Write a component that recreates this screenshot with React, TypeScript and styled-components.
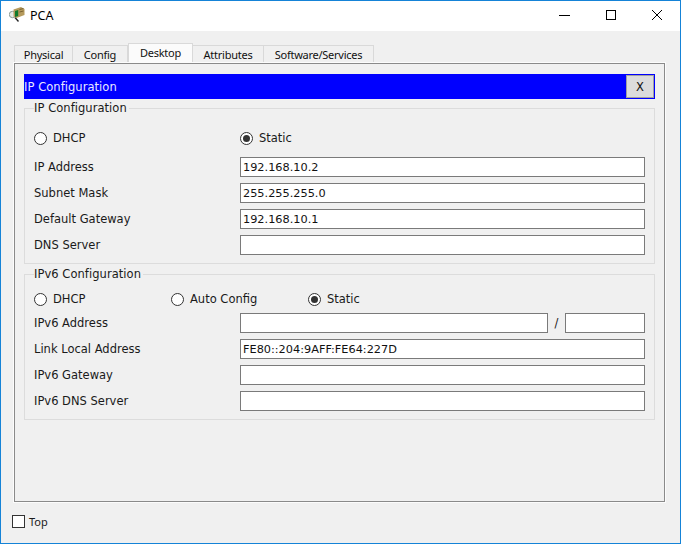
import styled, { createGlobalStyle } from 'styled-components';

const GlobalStyle = createGlobalStyle`
  html, body {
    margin: 0;
    padding: 0;
    background: #f0f0f0;
  }
  * {
    box-sizing: border-box;
  }
`;

const tabs = [
  { label: 'Physical', width: 59 },
  { label: 'Config', width: 55 },
  { label: 'Desktop', width: 65, active: true },
  { label: 'Attributes', width: 71 },
  { label: 'Software/Services', width: 110 },
];

const ipv4Rows = [
  { label: 'IP Address', value: '192.168.10.2' },
  { label: 'Subnet Mask', value: '255.255.255.0' },
  { label: 'Default Gateway', value: '192.168.10.1' },
  { label: 'DNS Server', value: '' },
];

const AppIcon = () => (
  <svg width="16" height="16" viewBox="0 0 16 16">
    <circle cx="3.5" cy="7.5" r="3.2" fill="#e8ecea" stroke="#8a9a94" strokeWidth="1" />
    <path d="M6 10.5l3.5 4" stroke="#222" strokeWidth="1.4" />
    <path d="M4.5 2.5l7.5-2.5 3.5 2v6l-8 3-3-1.5z" fill="#b59a5c" />
    <path d="M6 4l3.2-1v6l-3.2 1z" fill="#0f7a2c" />
    <path d="M10.5 2.5l4-1M10.5 5l4-1" stroke="#6a5326" strokeWidth="0.8" />
  </svg>
);

const MinimizeIcon = () => (
  <svg width="12" height="12" viewBox="0 0 12 12">
    <path d="M0 6.5h11" stroke="#000" strokeWidth="1" />
  </svg>
);

const MaximizeIcon = () => (
  <svg width="12" height="12" viewBox="0 0 12 12">
    <rect x="1.5" y="1.5" width="9" height="9" fill="none" stroke="#000" strokeWidth="1" />
  </svg>
);

const CloseIcon = () => (
  <svg width="12" height="12" viewBox="0 0 12 12">
    <path d="M1 1l10 10M11 1L1 11" stroke="#000" strokeWidth="1" />
  </svg>
);

const Radio = ({ checked }: { checked?: boolean }) => (
  <RadioCircle>{checked && <RadioDot />}</RadioCircle>
);

export default function App() {
  return (
    <>
      <GlobalStyle />
      <Frame>
        <TitleBar>
          <AppIcon />
          <TitleText>PCA</TitleText>
          <WindowControls>
            <MinimizeIcon />
            <MaximizeIcon />
            <CloseIcon />
          </WindowControls>
        </TitleBar>
        <Body>
          <TabStrip>
            {tabs.map((tab) => (
              <Tab key={tab.label} $active={tab.active} $width={tab.width}>
                {tab.label}
              </Tab>
            ))}
          </TabStrip>
          <Panel>
            <Header>
              <HeaderTitle>IP Configuration</HeaderTitle>
              <CloseButton>X</CloseButton>
            </Header>

            <Group $height={163}>
              <Legend>IP Configuration</Legend>
              <RadioRow $height={30}>
                <RadioOption $width={206}>
                  <Radio />
                  DHCP
                </RadioOption>
                <RadioOption>
                  <Radio checked />
                  Static
                </RadioOption>
              </RadioRow>
              <Rows>
                {ipv4Rows.map((row) => (
                  <FieldRow key={row.label}>
                    <FieldLabel>{row.label}</FieldLabel>
                    <Field>{row.value}</Field>
                  </FieldRow>
                ))}
              </Rows>
            </Group>

            <Group $height={153}>
              <Legend>IPv6 Configuration</Legend>
              <RadioRow $height={20}>
                <RadioOption $width={137}>
                  <Radio />
                  DHCP
                </RadioOption>
                <RadioOption $width={137}>
                  <Radio />
                  Auto Config
                </RadioOption>
                <RadioOption>
                  <Radio checked />
                  Static
                </RadioOption>
              </RadioRow>
              <Rows>
                <FieldRow>
                  <FieldLabel>IPv6 Address</FieldLabel>
                  <Field $width={308} />
                  <Slash>/</Slash>
                  <Field $width={80} />
                </FieldRow>
                <FieldRow>
                  <FieldLabel>Link Local Address</FieldLabel>
                  <Field>FE80::204:9AFF:FE64:227D</Field>
                </FieldRow>
                <FieldRow>
                  <FieldLabel>IPv6 Gateway</FieldLabel>
                  <Field />
                </FieldRow>
                <FieldRow>
                  <FieldLabel>IPv6 DNS Server</FieldLabel>
                  <Field />
                </FieldRow>
              </Rows>
            </Group>
          </Panel>
          <Footer>
            <CheckBox />
            <FooterLabel>Top</FooterLabel>
          </Footer>
        </Body>
      </Frame>
    </>
  );
}

const Frame = styled.div`
  width: 681px;
  height: 544px;
  display: flex;
  flex-direction: column;
  border: 1px solid #1583d7;
  background: #f0f0f0;
  overflow: hidden;
  font-family: 'DejaVu Sans', Verdana, sans-serif;
  font-size: 11px;
  color: #1a1a1a;
`;

const TitleBar = styled.div`
  height: 30px;
  flex: 0 0 30px;
  display: flex;
  align-items: center;
  padding: 0 17px 2px 8px;
  background: #fff;
`;

const TitleText = styled.span`
  margin-left: 5px;
  font-family: 'Noto Sans', Arial, sans-serif;
  font-size: 12.5px;
  color: #000;
`;

const WindowControls = styled.div`
  margin-left: auto;
  display: flex;
  align-items: center;
  gap: 34px;
`;

const Body = styled.div`
  flex: 1;
  display: flex;
  flex-direction: column;
  padding: 12px 15px 0 13px;
`;

const TabStrip = styled.div`
  height: 20px;
  display: flex;
  align-items: flex-end;
`;

const Tab = styled.div<{ $active?: boolean; $width: number }>`
  width: ${(p) => p.$width}px;
  height: ${(p) => (p.$active ? 20 : 18)}px;
  display: flex;
  align-items: center;
  justify-content: center;
  padding-bottom: ${(p) => (p.$active ? 2 : 1)}px;
  background: ${(p) => (p.$active ? '#fbfbfb' : '#f0f0f0')};
  border: 1px solid #d9d9d9;
  border-left-width: ${(p) => (p.$active ? 1 : 0)}px;
  border-bottom: none;
  font-family: 'Noto Sans', Arial, sans-serif;
  font-size: 11px;
  letter-spacing: -0.25px;
  color: #111;
  &:first-child {
    border-left-width: 1px;
  }
`;

const Panel = styled.div`
  height: 439px;
  width: 651px;
  display: flex;
  flex-direction: column;
  gap: 2px;
  padding: 10px 9px 0 9px;
  border: 1px solid #8a8a8a;
  outline: 1px solid #fcfcfc;
`;

const Header = styled.div`
  height: 25px;
  flex: 0 0 25px;
  display: flex;
  align-items: center;
  justify-content: space-between;
  padding-right: 1px;
  background: #0000ff;
`;

const HeaderTitle = styled.span`
  color: #e8e8ff;
  font-size: 11.5px;
  letter-spacing: 0.05px;
`;

const CloseButton = styled.div`
  width: 28px;
  height: 23px;
  display: flex;
  align-items: center;
  justify-content: center;
  background: #dcdcdc;
  border: 1px solid #a0a0a0;
  color: #111;
  font-size: 11.5px;
`;

const Group = styled.fieldset<{ $height: number }>`
  height: ${(p) => p.$height}px;
  flex: 0 0 auto;
  margin: 0;
  padding: 0 9px;
  border: 1px solid #dcdcdc;
  min-width: 0;
  display: block;
  & + & {
    margin-top: 1px;
  }
`;

const Legend = styled.legend`
  padding: 0 2px 0 0;
  margin-left: 0;
  font-size: 11.5px;
  line-height: 14px;
  letter-spacing: 0.05px;
`;

const RadioRow = styled.div<{ $height: number }>`
  height: ${(p) => p.$height}px;
  display: flex;
  align-items: center;
  margin-top: 8px;
`;

const RadioOption = styled.label<{ $width?: number }>`
  ${(p) => (p.$width ? `width: ${p.$width}px;` : '')}
  display: flex;
  align-items: center;
  gap: 6px;
  font-size: 11.5px;
`;

const RadioCircle = styled.span`
  width: 13px;
  height: 13px;
  display: flex;
  align-items: center;
  justify-content: center;
  border: 1px solid #333;
  border-radius: 50%;
  background: #fff;
`;

const RadioDot = styled.span`
  width: 7px;
  height: 7px;
  border-radius: 50%;
  background: #333;
`;

const Rows = styled.div`
  display: flex;
  flex-direction: column;
  gap: 6px;
  margin-top: 4px;
`;

const FieldRow = styled.div`
  height: 20px;
  display: flex;
  align-items: center;
`;

const FieldLabel = styled.span`
  width: 206px;
  flex: 0 0 206px;
  font-size: 11.5px;
`;

const Field = styled.div<{ $width?: number }>`
  ${(p) => (p.$width ? `flex: 0 0 ${p.$width}px;` : 'flex: 1;')}
  height: 20px;
  display: flex;
  align-items: center;
  padding: 1px 0 0 2px;
  background: #fff;
  border: 1px solid #7a7a7a;
  font-size: 11.3px;
  color: #111;
`;

const Slash = styled.span`
  flex: 0 0 17px;
  text-align: center;
  font-size: 11.5px;
`;

const Footer = styled.div`
  flex: 1;
  display: flex;
  align-items: center;
  margin-left: -2px;
  padding-bottom: 3px;
`;

const CheckBox = styled.span`
  width: 13px;
  height: 13px;
  background: #fff;
  border: 1px solid #333;
`;

const FooterLabel = styled.span`
  margin-left: 4px;
  font-family: 'Noto Sans', Arial, sans-serif;
  font-size: 11px;
`;
